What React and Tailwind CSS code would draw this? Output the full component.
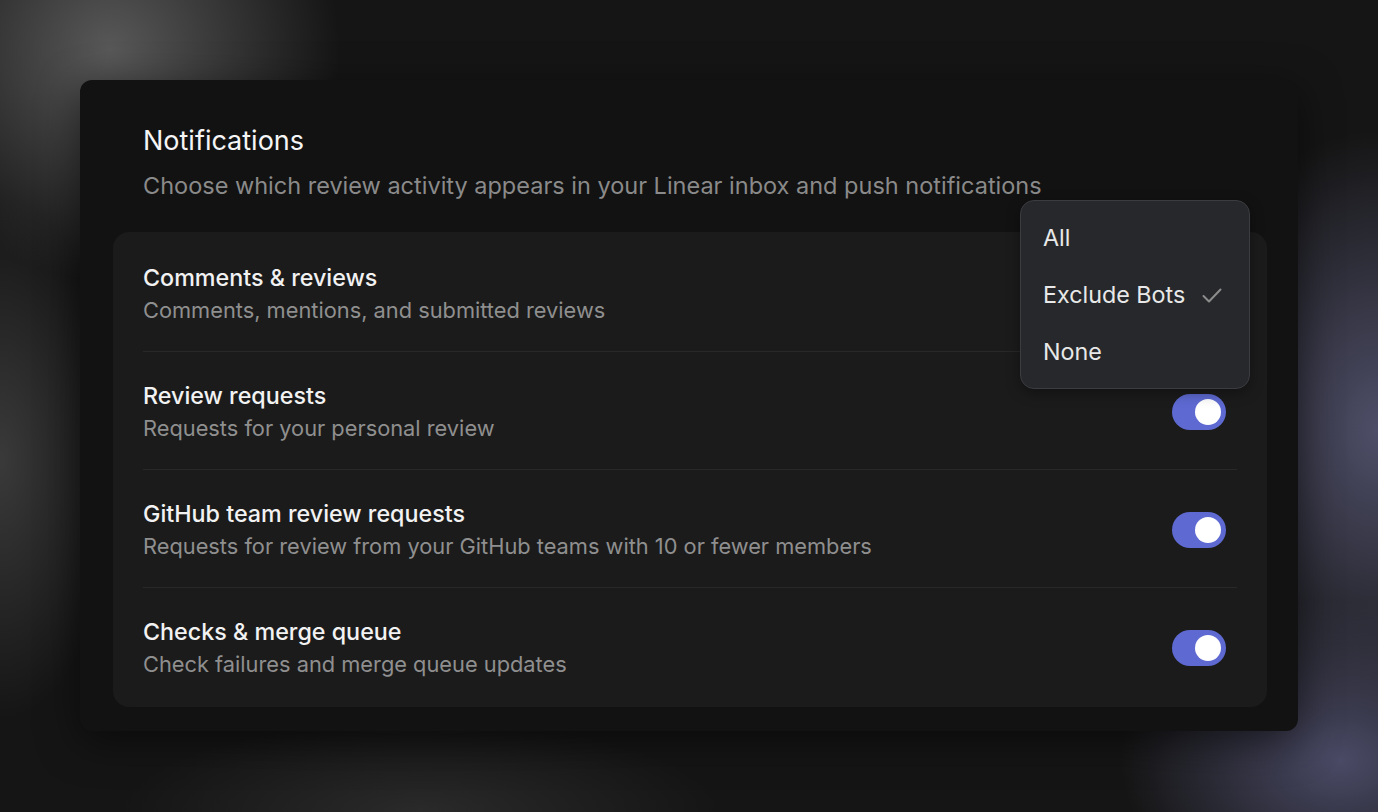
import React from "react";

const rows = [
    { id: "comments", title: "Comments & reviews", desc: "Comments, mentions, and submitted reviews", on: true },
    { id: "requests", title: "Review requests", desc: "Requests for your personal review", on: true },
    { id: "team", title: "GitHub team review requests", desc: "Requests for review from your GitHub teams with 10 or fewer members", on: true },
    { id: "checks", title: "Checks & merge queue", desc: "Check failures and merge queue updates", on: true },
];

const options = ["All", "Exclude Bots", "None"];

const Toggle = ({ on }) => (
    <div className={`w-[54px] h-[36px] rounded-full flex items-center px-[5px] ${on ? "bg-[#5e6ad2] justify-end" : "bg-[#3a3a3a] justify-start"}`}>
        <div className="w-[26px] h-[26px] rounded-full bg-white" />
    </div>
);

const Check = () => (
    <svg width="20" height="20" viewBox="0 0 20 20" fill="none" stroke="#8c8c8c" strokeWidth="2" strokeLinecap="round" strokeLinejoin="round">
        <path d="M1.5 10l5.5 5.5L18.5 3.5" />
    </svg>
);

const App = () => {
    return (
        <div
            className="min-h-screen w-full p-20 bg-[#151515] bg-[radial-gradient(circle_at_110px_50px,#585858_0,transparent_230px),radial-gradient(ellipse_120px_260px_at_0px_460px,#3a3a3a_0,transparent_100%),radial-gradient(ellipse_200px_300px_at_1378px_430px,#4e4e68_0,transparent_100%),radial-gradient(ellipse_220px_160px_at_1340px_760px,#4a4a66_0,transparent_100%),radial-gradient(ellipse_300px_90px_at_420px_812px,#2a2a2a_0,transparent_100%)]"
            style={{ fontFamily: "Inter, 'Noto Sans', sans-serif" }}
        >
            <div className="relative bg-[#121212] rounded-[12px] pl-[33px] pr-[31px] pt-[45px] pb-[24px] shadow-[0_10px_40px_rgba(0,0,0,0.5)]">
                <div className="pl-[30px]">
                    <h1 className="text-[27px] leading-[32px] text-[#f5f5f5] font-normal">Notifications</h1>
                    <p className="mt-[15px] text-[23.5px] leading-[28px] text-[#8a8a8a]">
                        Choose which review activity appears in your Linear inbox and push notifications
                    </p>
                </div>

                <div className="mt-[32px] bg-[#1b1b1b] rounded-[16px] px-[30px] py-[2px]">
                    {rows.map((row, i) => (
                        <div
                            key={row.id}
                            className={`flex items-center justify-between pt-[30px] pb-[27px] ${i < rows.length - 1 ? "border-b border-[#282828]" : ""}`}
                        >
                            <div className="flex flex-col gap-[4px]">
                                <div className="text-[23.3px] leading-[28px] text-[#f2f2f2] font-medium">{row.title}</div>
                                <div className="text-[21.8px] leading-[28px] text-[#8f8f8f]">{row.desc}</div>
                            </div>
                            <div className="mr-[11px]">
                                <Toggle on={row.on} />
                            </div>
                        </div>
                    ))}
                </div>

                {/* open select menu */}
                <div className="absolute left-[940px] top-[120px] w-[230px] bg-[#27282b] border border-[#3b3c40] rounded-[14px] pt-[9px] pb-[7px] shadow-[0_4px_14px_rgba(0,0,0,0.35)]">
                    {options.map((opt) => (
                        <div key={opt} className="h-[57px] flex items-center justify-between pl-[22px] pr-[27px] text-[23.3px] text-[#e8e8e8]">
                            <span>{opt}</span>
                            {opt === "Exclude Bots" && <Check />}
                        </div>
                    ))}
                </div>
            </div>
        </div>
    );
};

export default App;
